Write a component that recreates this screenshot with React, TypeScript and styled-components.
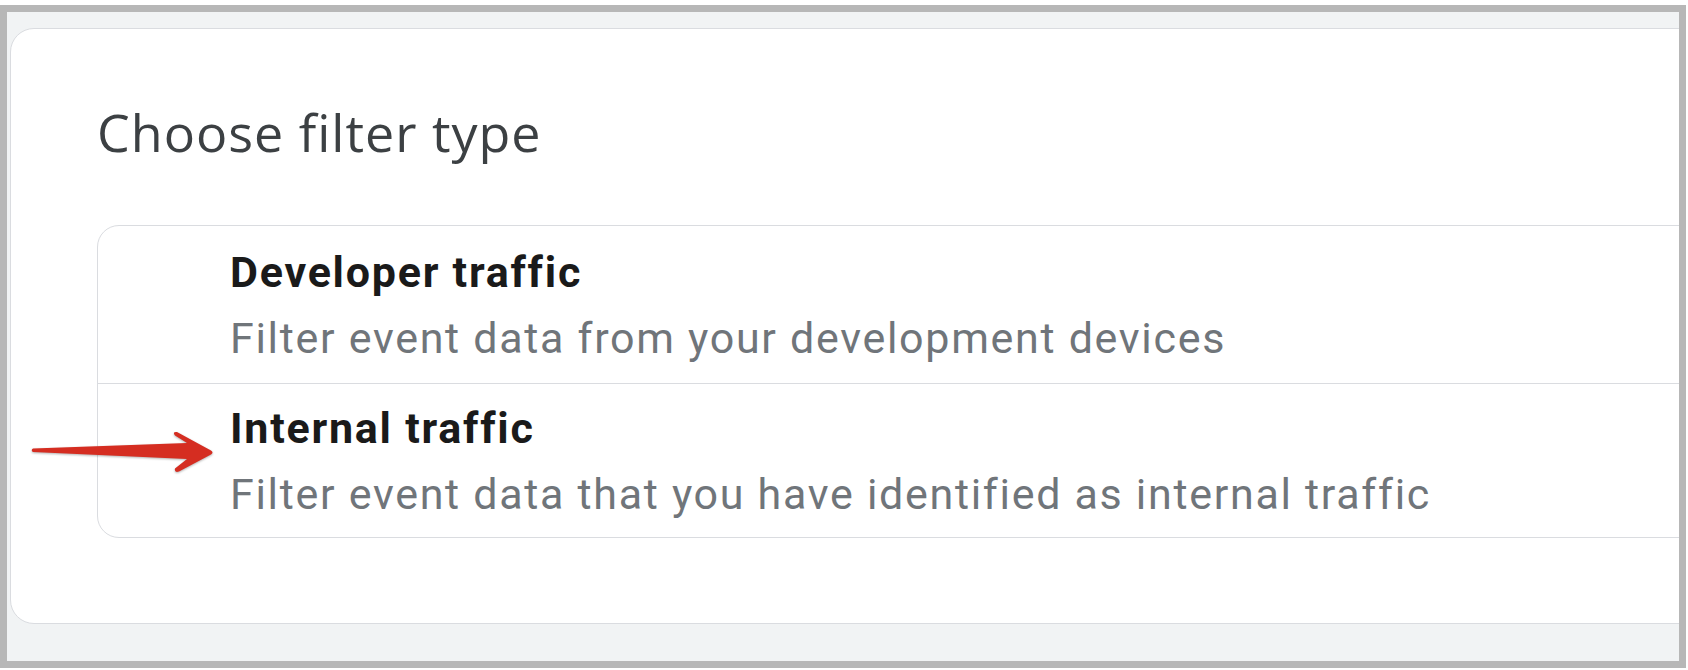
import React from "react";
import styled, { createGlobalStyle } from "styled-components";

const Global = createGlobalStyle`
  html, body { margin: 0; padding: 0; background: #ffffff; }
  #root { width: 1688px; height: 670px; }
`;

const Frame = styled.div`
  position: relative;
  box-sizing: border-box;
  margin-top: 5px;
  width: 1686px;
  height: 663px;
  border: 7px solid #b7b7b7;
  background: #f1f3f4;
  overflow: hidden;
  padding: 16px 0 0 3px;
`;

const Card = styled.section`
  box-sizing: border-box;
  width: 1760px;
  height: 596px;
  background: #ffffff;
  border: 1px solid #dadce0;
  border-radius: 24px;
  padding: 0 0 0 86px;
`;

const Heading = styled.h2`
  margin: 0;
  padding-top: 73px;
  height: 196px;
  box-sizing: border-box;
  font-family: "Open Sans", "Liberation Sans", sans-serif;
  font-weight: 400;
  font-size: 52px;
  line-height: 60px;
  color: #3c4043;
  letter-spacing: 1px;
`;

const List = styled.div`
  box-sizing: border-box;
  border: 1px solid #dadce0;
  border-radius: 22px;
  overflow: hidden;
`;

const Row = styled.div<{ $first?: boolean }>`
  box-sizing: border-box;
  height: ${(p) => (p.$first ? "157px" : "154px")};
  padding: ${(p) => (p.$first ? "13px" : "11px")} 0 0 132px;
  border-top: ${(p) => (p.$first ? "none" : "1px solid #dadce0")};
  display: flex;
  flex-direction: column;
`;

const RowTitle = styled.div`
  font-family: Roboto, "Liberation Sans", sans-serif;
  font-weight: 700;
  font-size: 43px;
  line-height: 66px;
  color: #1a1a1a;
  letter-spacing: 1.75px;
`;

const RowText = styled.div`
  font-family: Roboto, "Liberation Sans", sans-serif;
  font-weight: 400;
  font-size: 43px;
  line-height: 66px;
  color: #70757a;
  letter-spacing: 1.7px;
`;

const Arrow = styled.svg`
  position: absolute;
  left: 21px;
  top: 416px;
  width: 192px;
  height: 48px;
  overflow: visible;
  filter: drop-shadow(0 1px 1px rgba(0, 0, 0, 0.3));
`;

export default function App() {
  return (
    <>
      <Global />
      <Frame>
        <Card>
          <Heading>Choose filter type</Heading>
          <List>
            <Row $first>
              <RowTitle>Developer traffic</RowTitle>
              <RowText>Filter event data from your development devices</RowText>
            </Row>
            <Row>
              <RowTitle>Internal traffic</RowTitle>
              <RowText>Filter event data that you have identified as internal traffic</RowText>
            </Row>
          </List>
        </Card>
        <Arrow viewBox="0 0 192 48">
          <path
            d="M5 20.5 L159 15 L147 7.5 Q144 3.5 149 4 L183 22.5 Q186 24.5 183 26.5 L151 43.5 Q146 45 147 40.5 L159 31 L5 24 Q2.5 22.2 5 20.5 Z"
            fill="#d52d21"
          />
        </Arrow>
      </Frame>
    </>
  );
}
